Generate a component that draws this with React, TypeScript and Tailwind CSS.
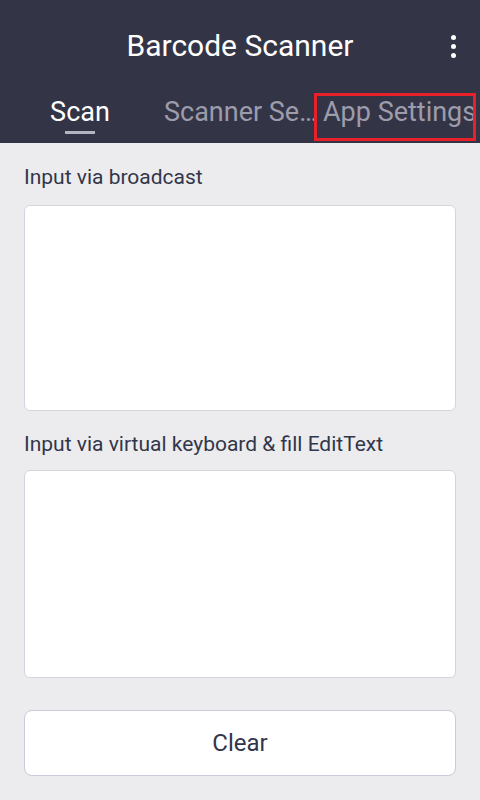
import React from "react";

export default function App() {
  const font = { fontFamily: "Roboto, 'Noto Sans', sans-serif" };

  return (
    <div
      className="relative w-[480px] h-[800px] bg-[#ececef] overflow-hidden"
      style={font}
    >
      {/* app bar + tabs */}
      <div className="bg-[#343447] h-[143px] flex flex-col">
        <div className="relative h-[92px] flex items-center justify-center">
          <span className="text-white text-[30px] leading-none">
            Barcode Scanner
          </span>
          <div className="absolute right-[24px] top-[35px] flex flex-col gap-[4px]">
            <span className="block w-[5px] h-[5px] rounded-full bg-white" />
            <span className="block w-[5px] h-[5px] rounded-full bg-white" />
            <span className="block w-[5px] h-[5px] rounded-full bg-white" />
          </div>
        </div>
        <div className="flex h-[51px]">
          <div className="w-[160px] flex flex-col items-center pt-[5px]">
            <span className="text-white text-[27px] leading-[31px]">Scan</span>
            <span className="block mt-[3px] w-[30px] h-[3px] bg-[#b4b4c2]" />
          </div>
          <div className="w-[160px] flex justify-start pl-[4px] pt-[5px]">
            <span className="text-[#9c9cab] text-[27px] leading-[31px] whitespace-nowrap">
              Scanner Se…
            </span>
          </div>
          <div className="w-[160px] flex justify-start pl-[3px] pt-[5px]">
            <span className="text-[#9c9cab] text-[27px] leading-[31px] whitespace-nowrap">
              App Settings
            </span>
          </div>
        </div>
      </div>

      {/* highlight annotation */}
      <div className="absolute left-[314px] top-[93px] w-[162px] h-[48px] border-[3px] border-[#e8202a]" />

      {/* content */}
      <div className="px-[24px] pt-[21px] flex flex-col">
        <div className="text-[21px] leading-[26px] text-[#323649]">
          Input via broadcast
        </div>
        <div className="mt-[15px] h-[206px] bg-white border border-[#d4d4df] rounded-[6px]" />
        <div className="mt-[20px] text-[21px] leading-[26px] text-[#323649]">
          Input via virtual keyboard &amp; fill EditText
        </div>
        <div className="mt-[13px] h-[208px] bg-white border border-[#d4d4df] rounded-[6px]" />
        <button className="mt-[32px] h-[66px] bg-white border border-[#c9cadb] rounded-[8px] text-[24px] text-[#323649]">
          Clear
        </button>
      </div>
    </div>
  );
}
